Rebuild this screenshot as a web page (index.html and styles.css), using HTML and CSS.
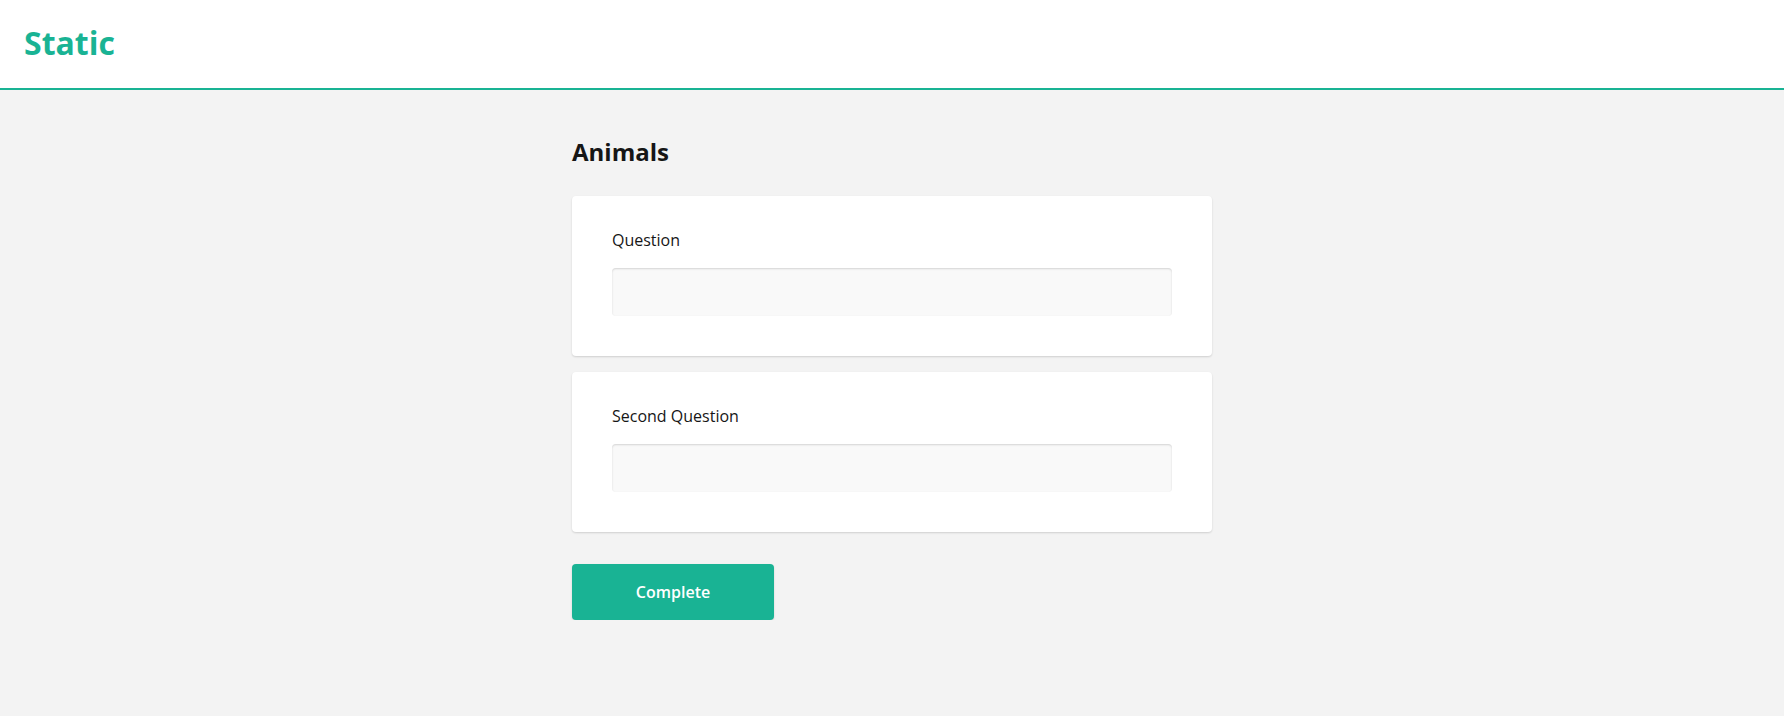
FILE: index.html
```html
<!DOCTYPE html>
<html lang="en">
<head>
<meta charset="utf-8">
<title>Static</title>
<link rel="stylesheet" href="styles.css">
</head>
<body>
<header class="site-header">
  <div class="brand">Static</div>
</header>
<main class="survey">
  <h1 class="page-title">Animals</h1>
  <div class="questions">
    <div class="card">
      <div class="q-label">Question</div>
      <input class="q-input" type="text" aria-label="Question">
    </div>
    <div class="card">
      <div class="q-label">Second Question</div>
      <input class="q-input" type="text" aria-label="Second Question">
    </div>
  </div>
  <div class="nav">
    <button class="complete-btn" type="button">Complete</button>
  </div>
</main>
</body>
</html>
```

FILE: styles.css
```css
* { box-sizing: border-box; }
html, body {
  margin: 0;
  padding: 0;
  background: #f3f3f3;
  font-family: "Open Sans", "Noto Sans", sans-serif;
  color: #161616;
}
.site-header {
  height: 90px;
  background: #ffffff;
  border-bottom: 2px solid #19b394;
  display: flex;
  align-items: center;
  padding: 0 0 2px 24px;
}
.brand {
  font-size: 32px;
  line-height: 40px;
  font-weight: 700;
  color: #19b394;
}
.survey {
  width: 640px;
  margin: 0 auto;
  padding-top: 46px;
}
.page-title {
  margin: 0 0 28px 0;
  font-size: 24px;
  line-height: 32px;
  font-weight: 700;
  color: #161616;
}
.questions {
  display: flex;
  flex-direction: column;
  gap: 16px;
}
.card {
  background: #ffffff;
  border-radius: 4px;
  box-shadow: 0 1px 2px rgba(0, 0, 0, 0.15);
  padding: 32px 40px 40px;
  display: flex;
  flex-direction: column;
  gap: 16px;
}
.q-label {
  font-size: 16px;
  line-height: 24px;
  font-weight: 400;
}
.q-input {
  height: 48px;
  width: 100%;
  border: none;
  border-radius: 4px;
  background: #f9f9f9;
  box-shadow: inset 0 1px 2px rgba(0, 0, 0, 0.15);
  font-family: inherit;
  font-size: 16px;
  padding: 12px 16px;
  outline: none;
}
.nav {
  margin-top: 32px;
  display: flex;
}
.complete-btn {
  width: 202px;
  height: 56px;
  border: none;
  border-radius: 4px;
  background: #19b394;
  color: #ffffff;
  font-family: inherit;
  font-size: 16px;
  line-height: 24px;
  font-weight: 600;
  box-shadow: 0 1px 2px rgba(0, 0, 0, 0.15);
  cursor: pointer;
}
```
